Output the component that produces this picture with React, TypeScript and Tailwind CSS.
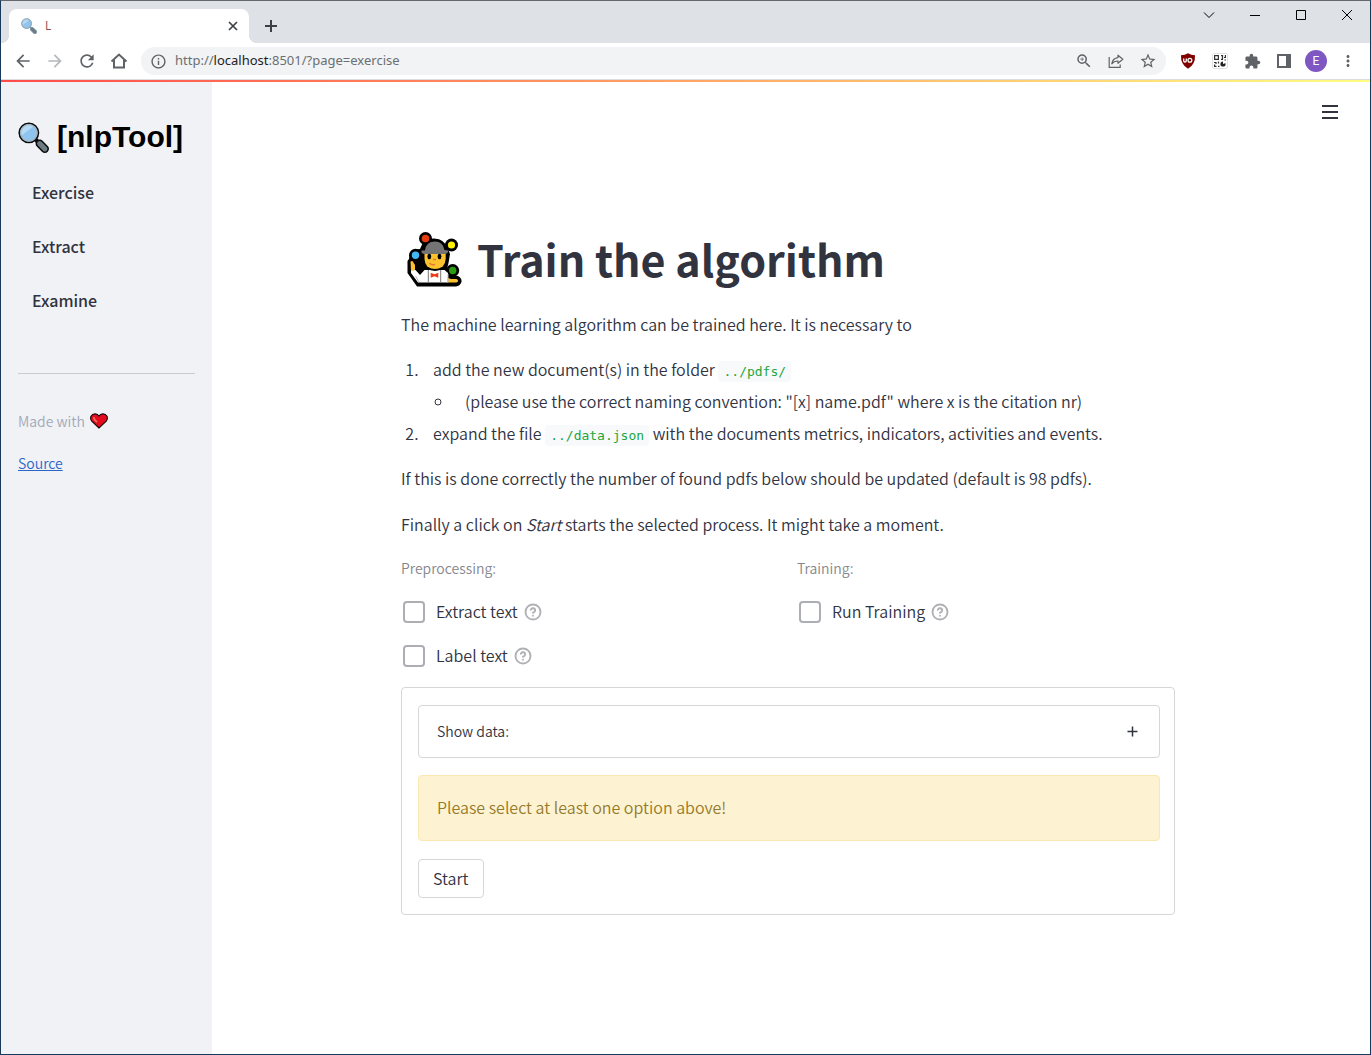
import { useState } from "react";
import type { ReactNode } from "react";
import { CircleHelp } from "lucide-react";
import {
  MdArrowBack,
  MdArrowForward,
  MdExtension,
  MdInfoOutline,
  MdMoreVert,
  MdRefresh,
  MdStarOutline,
  MdZoomIn,
} from "react-icons/md";

function Magnifier({ className, outline }: { className: string; outline: string }) {
  return (
    <svg viewBox="0 0 30 30" className={className} aria-hidden="true">
      <path d="M21 21 L26 26" stroke={outline} strokeWidth="8" strokeLinecap="round" />
      <path d="M17 17 L21 21" stroke={outline} strokeWidth="4" />
      <path d="M21 21 L26 26" stroke="#6d7b83" strokeWidth="5" strokeLinecap="round" />
      <circle cx="10.5" cy="10.5" r="9.3" fill="#8fc4ee" stroke={outline} strokeWidth="1.6" />
      <path d="M3.5 13 A7.5 7.5 0 0 1 15 4 Z" fill="#b4dbf6" />
      <circle cx="10.5" cy="10.5" r="8" fill="none" stroke="#a3b5c0" strokeWidth="1.2" />
    </svg>
  );
}

function Juggler() {
  return (
    <svg viewBox="0 0 55 55" className="size-[55px] shrink-0" aria-hidden="true">
      <path
        d="M2 27 Q4 17 13 17 Q16 6 27 6.500 Q38 7 41 17 L43 22 L41.500 31 L40 37 L46 43 L51 44 Q55 46 54.500 50 Q53 54 49 54.500 H10 L0.500 41 V29 Z"
        fill="#000"
      />
      <circle cx="18.500" cy="6.500" r="6.500" fill="#000" />
      <circle cx="44.500" cy="13" r="6.500" fill="#000" />
      <circle cx="8.500" cy="23.300" r="6.500" fill="#000" />
      <circle cx="45.700" cy="38.500" r="6.500" fill="#000" />
      <path d="M3.500 29.500 L5.500 29 L8 33 V38 L4 39 Z" fill="#fcc12f" />
      <path d="M4 38.500 L8.500 38 L13 43 L17.500 38 H37.500 L41 41 V50.500 H11 L4 41 Z" fill="#fff" />
      <path d="M40.500 45.700 L44 47 H49 Q51.500 47.500 51 49.500 L49.500 50.500 H40.500 Z" fill="#fcc12f" />
      <path d="M17.500 20 H38.700 V27 Q38 37 28 37.500 Q18 37 17.500 27 Z" fill="#fcc12f" />
      <path d="M20 35.500 Q24 38 28 38 Q32 38 36 35.500" fill="none" stroke="#000" strokeWidth="1.800" />
      <path d="M21.300 38 V50.500 M33.700 38 V50.500" stroke="#777" strokeWidth="1" />
      <path d="M8.500 44 L12 50 M41 42 V50.500" stroke="#b6b6b6" strokeWidth="1" />
      <path d="M23.700 40.700 L27.500 42.300 L31.300 40.700 V45.700 L27.500 44.200 L23.700 45.700 Z" fill="#f03a17" />
      <path d="M18 18.500 Q19 9.500 28 9.500 Q36 9.500 37.500 18 L41 18.500 Q41.500 21 38 22 H17 Q14 21.500 14.500 18.500 Z" fill="#747474" />
      <ellipse cx="22.300" cy="24.500" rx="1.900" ry="2.700" fill="#000" />
      <ellipse cx="32.500" cy="24.500" rx="1.900" ry="2.700" fill="#000" />
      <path d="M22.500 31 Q24.500 33.500 28 32.500 M26 27.500 H29" fill="none" stroke="#e37a2b" strokeWidth="1.400" />
      <circle cx="18.500" cy="6.500" r="3.800" fill="#e23c10" />
      <circle cx="44.500" cy="13" r="3.600" fill="#fff100" />
      <circle cx="8.500" cy="23.300" r="3.700" fill="#41b9f5" />
      <circle cx="45.700" cy="38.500" r="3.700" fill="#2b9b11" />
    </svg>
  );
}

function Heart() {
  return (
    <svg viewBox="0 0 18 16" className="h-4 w-[18px]" aria-hidden="true">
      <path
        d="M9 15 L1.500 7.800 Q0 5.500 1 3.200 Q2.500 0.800 5.200 0.900 Q7.600 1 9 3 Q10.400 1 12.800 0.900 Q15.500 0.800 17 3.200 Q18 5.500 16.500 7.800 Z"
        fill="#e30b1e"
        stroke="#16060a"
        strokeWidth="1.100"
      />
      <path d="M3.800 4 Q3.600 6.500 7 9" fill="none" stroke="#f4705a" strokeWidth="1.600" />
    </svg>
  );
}

function HomeIcon() {
  return (
    <svg viewBox="0 0 18 18" className="size-[18px]" aria-hidden="true">
      <path d="M1.500 9.500 L9 2.500 L16.500 9.500 M4 8 V15.500 H14 V8" fill="none" stroke="currentColor" strokeWidth="2" />
    </svg>
  );
}

function ShareIcon() {
  return (
    <svg viewBox="0 0 16 16" className="size-4" fill="none" stroke="currentColor" strokeWidth="1.200" aria-hidden="true">
      <path d="M1.200 4 V14.300 H12.200 V11.500" />
      <path d="M10 2.200 L14.800 6.300 L10 10.300 V8 Q6 7.800 3.800 10.800 Q4.500 5.300 10 4.600 Z" strokeLinejoin="round" />
    </svg>
  );
}

function ShieldIcon() {
  return (
    <svg viewBox="0 0 16 16" className="size-4" aria-hidden="true">
      <path d="M8 0.300 Q11 2.200 15 2.200 Q15.500 11.500 8 15.700 Q0.500 11.500 1 2.200 Q5 2.200 8 0.300Z" fill="#800000" />
      <path d="M3.700 5.500 V7.800 Q3.700 9 5 9 Q6.300 9 6.300 7.800 V5.500" fill="none" stroke="#fff" strokeWidth="1.300" />
      <circle cx="9.900" cy="7.200" r="1.900" fill="none" stroke="#fff" strokeWidth="1.300" />
    </svg>
  );
}

function QrIcon() {
  return (
    <svg viewBox="0 0 16 16" className="size-4" aria-hidden="true">
      <rect x="0.500" y="0.500" width="15" height="15" rx="1.500" fill="#fff" stroke="#e1e1e1" />
      <g fill="none" stroke="#333" strokeWidth="1.200">
        <path d="M2.600 2.600 H6.400 V6.400 H2.600 Z M9 2.600 H10.500 V6 M13.400 2 V4.500 H12 M9 6.400 H11 M2 9.500 H4 V11 M6.500 8.500 V10.500 M2.600 11.500 V13.400 H4.500 M6 13.400 H7.500 M12.500 7 H14" />
      </g>
      <circle cx="11" cy="11" r="2.600" fill="#222" />
      <path d="M11 11 V8 H14 V10 Z" fill="#fff" />
    </svg>
  );
}

function SidePanelIcon() {
  return (
    <svg viewBox="0 0 14 14" className="size-[14px]" aria-hidden="true">
      <path d="M0 0 H14 V14 H0 Z M2 2 V12 H9 V2 Z" fill="#5f6368" fillRule="evenodd" />
    </svg>
  );
}

function IconButton({ label, className = "", children }: { label: string; className?: string; children: ReactNode }) {
  return (
    <button type="button" aria-label={label} className={`flex h-7 w-8 shrink-0 items-center justify-center text-[#5f6368] ${className}`}>
      {children}
    </button>
  );
}

function WindowButton({ label, d }: { label: string; d: string }) {
  return (
    <button type="button" aria-label={label} className="flex h-7 w-[46px] items-center justify-center">
      <svg viewBox="0 0 12 12" className="size-3" fill="none" stroke="#000" strokeWidth="1" aria-hidden="true">
        <path d={d} />
      </svg>
    </button>
  );
}

function TabStrip() {
  return (
    <div className="flex h-[42px] items-end justify-between bg-[#dee1e6]">
      <div className="flex items-end">
        <div className="relative ml-2 flex h-[34px] w-60 items-center rounded-t-lg bg-white pr-2 pl-3 font-['Open_Sans',sans-serif]">
          <span className="absolute bottom-0 -left-2 size-2 bg-[radial-gradient(circle_at_0_0,#dee1e6_8px,#fff_8px)]" />
          <span className="absolute -right-2 bottom-0 size-2 bg-[radial-gradient(circle_at_100%_0,#dee1e6_8px,#fff_8px)]" />
          <Magnifier className="size-4" outline="#7f97a6" />
          <span className="ml-2 flex-1 text-xs font-normal text-[#8a4f48]">L</span>
          <button type="button" aria-label="Close tab" className="flex size-4 items-center justify-center">
            <svg viewBox="0 0 10 10" className="size-[10px]" aria-hidden="true">
              <path d="M1 1 L9 9 M9 1 L1 9" stroke="#3c4043" strokeWidth="1.700" />
            </svg>
          </button>
        </div>
        <button type="button" aria-label="New tab" className="ml-2 flex h-[34px] w-7 items-center justify-center">
          <svg viewBox="0 0 12 12" className="size-3" aria-hidden="true">
            <path d="M6 0 V12 M0 6 H12" stroke="#3c4043" strokeWidth="2" />
          </svg>
        </button>
      </div>
      <div className="flex self-start">
        <WindowButton label="Search tabs" d="M1 3.500 L6 8.500 L11 3.500" />
        <WindowButton label="Minimize" d="M1 6.500 H11" />
        <WindowButton label="Maximize" d="M1.500 1.500 H10.500 V10.500 H1.500 Z" />
        <WindowButton label="Close" d="M1 1 L11 11 M11 1 L1 11" />
      </div>
    </div>
  );
}

function Toolbar() {
  return (
    <div className="flex items-center border-b border-[#dcdde0] bg-white px-[6px] py-1">
      <IconButton label="Back"><MdArrowBack size={20} /></IconButton>
      <IconButton label="Forward" className="opacity-45"><MdArrowForward size={20} /></IconButton>
      <IconButton label="Reload"><MdRefresh size={20} /></IconButton>
      <IconButton label="Home"><HomeIcon /></IconButton>
      <div className="mx-[6px] flex h-7 min-w-0 flex-1 items-center rounded-full bg-[#f1f3f4] pr-[2px] pl-[9px]">
        <MdInfoOutline size={17} className="shrink-0 text-[#5f6368]" />
        <div className="ml-2 flex-1 truncate font-['Noto_Sans',sans-serif] text-[13px] font-normal text-[#6b6f73]">
          http://<span className="text-[#202124]">localhost</span>:8501/?page=exercise
        </div>
        <IconButton label="Zoom"><MdZoomIn size={18} /></IconButton>
        <IconButton label="Share"><ShareIcon /></IconButton>
        <IconButton label="Bookmark"><MdStarOutline size={18} /></IconButton>
      </div>
      <IconButton label="uBlock Origin"><ShieldIcon /></IconButton>
      <IconButton label="QR code"><QrIcon /></IconButton>
      <IconButton label="Extensions"><MdExtension size={17} /></IconButton>
      <IconButton label="Side panel"><SidePanelIcon /></IconButton>
      <IconButton label="Profile">
        <span className="flex size-[22px] items-center justify-center rounded-full bg-[#7e57c2] font-['Roboto',sans-serif] text-xs font-normal text-white">E</span>
      </IconButton>
      <IconButton label="Menu"><MdMoreVert size={18} /></IconButton>
    </div>
  );
}

function Sidebar() {
  return (
    <aside className="w-[211px] shrink-0 bg-[#f0f2f6] px-[17px] pt-[37px]">
      <div className="flex items-center gap-2">
        <Magnifier className="size-[31px]" outline="#0c0c0c" />
        <h2 className="font-['Liberation_Sans',sans-serif] text-[30px] leading-9 font-bold text-black">[nlpTool]</h2>
      </div>
      <nav className="mt-[23px] flex flex-col gap-[26px] pl-[14px]">
        {["Exercise", "Extract", "Examine"].map((item) => (
          <a key={item} href="#" className="leading-7 font-medium">{item}</a>
        ))}
      </nav>
      <hr className="mt-[59px] border-[#c9cbd1]" />
      <p className="mt-[35px] flex items-center gap-[5px] text-sm leading-6 text-[#a3a8b8]">
        Made with <Heart />
      </p>
      <a href="#" className="mt-[18px] inline-block text-sm leading-6 text-[#2a66c8] underline">Source</a>
    </aside>
  );
}

function Option({ label }: { label: string }) {
  const [checked, setChecked] = useState(false);
  return (
    <div className="flex h-7 items-center pl-[2px]">
      <label className="flex items-center gap-[11px]">
        <input
          type="checkbox"
          checked={checked}
          onChange={() => setChecked(!checked)}
          className="size-[22px] appearance-none rounded border-2 border-[#adaeb3] bg-white checked:border-[#ff4b4b] checked:bg-[#ff4b4b]"
        />
        <span className="pb-[2px]">{label}</span>
      </label>
      <CircleHelp size={18} strokeWidth={2.5} className="ml-[6px] text-[#b0b1b5]" />
    </div>
  );
}

function Code({ children }: { children: ReactNode }) {
  return (
    <code className="rounded bg-[#f8f9fb] px-[5px] py-[3px] font-['DejaVu_Sans_Mono',monospace] text-[13px] leading-none text-[#21a73d]">{children}</code>
  );
}

function TrainPage() {
  return (
    <main className="min-w-0 flex-1 bg-white">
      <header className="flex h-[60px] items-center justify-end pr-8">
        <button type="button" aria-label="Main menu" className="flex w-4 flex-col gap-1">
          <span className="h-[2px] bg-[#31333f]" />
          <span className="h-[2px] bg-[#31333f]" />
          <span className="h-[2px] bg-[#31333f]" />
        </button>
      </header>
      <div className="pr-[6px]">
        <div className="mx-auto w-full max-w-[774px] pt-[89px] leading-7">
          <div className="flex items-center gap-[15px] pl-[6px]">
            <Juggler />
            <h1 className="pb-[2px] text-[43px] leading-[54px] font-bold">Train the algorithm</h1>
          </div>
          <p className="mt-[23px]">The machine learning algorithm can be trained here. It is necessary to</p>
          <ol className="mt-[17px] flex list-decimal flex-col gap-1">
            <li className="ml-[21px] pl-[11px]">
              add the new document(s) in the folder <Code>../pdfs/</Code>
              <ul className="mt-1 list-[circle]">
                <li className="ml-[21px] pl-[11px]">
                  (please use the correct naming convention: "[x] name.pdf" where x is the citation nr)
                </li>
              </ul>
            </li>
            <li className="ml-[21px] pl-[11px]">
              expand the file <Code>../data.json</Code> with the documents metrics, indicators, activities and events.
            </li>
          </ol>
          <p className="mt-[17px]">
            If this is done correctly the number of found pdfs below should be updated (default is 98 pdfs).
          </p>
          <p className="mt-[18px]">
            Finally a click on <em>Start</em> starts the selected process. It might take a moment.
          </p>
          <div className="mt-[18px] grid grid-cols-2 gap-[18px]">
            <div className="flex flex-col gap-4">
              <p className="mb-[2px] text-sm leading-6 text-[#86878d]">Preprocessing:</p>
              <Option label="Extract text" />
              <Option label="Label text" />
            </div>
            <div className="flex flex-col gap-4">
              <p className="mb-[2px] text-sm leading-6 text-[#86878d]">Training:</p>
              <Option label="Run Training" />
            </div>
          </div>
          <form className="mt-[17px] rounded border border-[#d6d6d9] pt-[17px] pr-[14px] pb-4 pl-4" onSubmit={(e) => e.preventDefault()}>
            <button type="button" className="flex h-[53px] w-full items-center justify-between rounded border border-[#d6d6d9] pr-[21px] pl-[18px] text-sm">
              <span className="pb-[2px]">Show data:</span>
              <svg viewBox="0 0 11 11" className="size-[11px]" aria-hidden="true">
                <path d="M5.500 0.500 V10.500 M0.500 5.500 H10.500" stroke="#31333f" strokeWidth="1.500" />
              </svg>
            </button>
            <div role="alert" className="mt-[17px] flex h-[66px] items-center rounded border border-[#fbe8b0] bg-[#fdf3d3] px-[18px] pb-[2px] text-[#957a2a]">
              Please select at least one option above!
            </div>
            <button type="submit" className="mt-[18px] block h-[39px] rounded border border-[#d6d6d9] px-[14px] pb-[2px]">Start</button>
          </form>
        </div>
      </div>
    </main>
  );
}

export default function App() {
  return (
    <div className="flex min-h-screen flex-col border border-[#173a5a] border-t-[#66686d] font-['Noto_Sans_CJK_SC',sans-serif] text-base font-[350] text-[#31333f]">
      <TabStrip />
      <Toolbar />
      <div className="h-[2px] bg-[linear-gradient(90deg,#ff4b4b,#fffd80)]" />
      <div className="flex flex-1">
        <Sidebar />
        <TrainPage />
      </div>
    </div>
  );
}
